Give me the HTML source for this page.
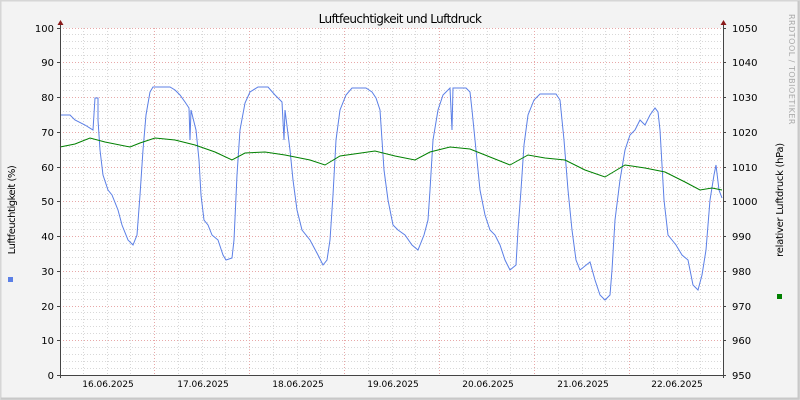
<!DOCTYPE html>
<html><head><meta charset="utf-8"><style>
html,body{margin:0;padding:0;background:#f3f3f3}
svg{display:block}
text{font-family:"DejaVu Sans","Liberation Sans",sans-serif;font-size:10px;fill:#000}
</style></head><body>
<svg width="800" height="400" viewBox="0 0 800 400" xmlns="http://www.w3.org/2000/svg">
<rect x="0" y="0" width="800" height="400" fill="#f3f3f3"/>
<path d="M0.5 0.5H799.5V399.5H0.5Z" fill="none" stroke="#d6d6d6" stroke-width="2"/>
<path d="M1 398.5H799M798.5 1V399" stroke="#c8c8c8" stroke-width="2"/>
<rect x="60" y="28" width="663" height="347" fill="#fff"/>
<g stroke="#d8d8d8" stroke-dasharray="1 2" stroke-width="1">
<path d="M83.5 28V375M107.5 28V375M130.5 28V375M178.5 28V375M202.5 28V375M225.5 28V375M273.5 28V375M297.5 28V375M320.5 28V375M368.5 28V375M392.5 28V375M415.5 28V375M463.5 28V375M487.5 28V375M510.5 28V375M558.5 28V375M582.5 28V375M605.5 28V375M653.5 28V375M677.5 28V375M700.5 28V375"/>
<path d="M60 34.5H723M60 41.5H723M60 48.5H723M60 55.5H723M60 69.5H723M60 76.5H723M60 83.5H723M60 90.5H723M60 104.5H723M60 111.5H723M60 118.5H723M60 125.5H723M60 139.5H723M60 146.5H723M60 153.5H723M60 160.5H723M60 173.5H723M60 180.5H723M60 187.5H723M60 194.5H723M60 208.5H723M60 215.5H723M60 222.5H723M60 229.5H723M60 243.5H723M60 250.5H723M60 257.5H723M60 264.5H723M60 278.5H723M60 285.5H723M60 292.5H723M60 299.5H723M60 312.5H723M60 319.5H723M60 326.5H723M60 333.5H723M60 347.5H723M60 354.5H723M60 361.5H723M60 368.5H723"/>
</g>
<g stroke="#e8a8a8" stroke-dasharray="1 2" stroke-width="1">
<path d="M154.5 28V375M249.5 28V375M344.5 28V375M439.5 28V375M534.5 28V375M629.5 28V375"/>
<path d="M60 28.5H723M60 62.5H723M60 97.5H723M60 132.5H723M60 167.5H723M60 201.5H723M60 236.5H723M60 271.5H723M60 306.5H723M60 340.5H723"/>
</g>
<polyline fill="none" stroke="#5b7fe6" stroke-width="1" points="60,115 70,115 75,120 85,125 93,130 95,98 98,98 98,120 100,150 103,175 108,190 112,195 118,210 122,225 128,240 133,245 137,235 140,195 143,150 146,115 150,92 153,87 170,87 175,90 180,95 185,102 189,108 190,140 191,110 196,130 199,160 201,195 204,220 208,225 212,235 218,240 223,255 226,260 232,258 234,240 237,175 240,130 245,103 250,92 258,87 268,87 275,95 282,102 284,140 285,110 290,150 293,180 297,210 302,230 310,240 318,255 323,265 327,260 330,240 333,195 336,140 340,110 346,95 352,88 366,88 372,92 376,98 380,110 384,170 388,200 393,225 398,230 405,235 412,245 418,250 424,235 428,220 430,190 433,140 438,110 443,95 450,88 452,130 453,88 466,88 470,92 472,110 476,150 480,190 485,215 490,230 495,235 500,245 505,260 510,270 516,265 518,230 521,190 524,145 528,115 534,100 540,94 556,94 560,100 564,140 568,190 572,230 576,260 580,270 590,262 595,280 600,295 605,300 610,295 612,270 615,220 620,180 625,150 630,135 635,130 640,120 645,125 650,115 655,108 658,112 660,130 664,200 668,235 672,240 676,245 682,255 688,260 693,285 698,290 702,275 706,250 710,200 714,175 716,165 719,190 722,198"/>
<polyline fill="none" stroke="#008000" stroke-width="1" points="60,147 75,144 90,138 105,142 130,147 140,143 155,138 175,140 195,145 215,152 232,160 245,153 265,152 285,155 310,160 325,165 340,156 375,151 395,156 415,160 430,152 450,147 470,149 490,157 510,165 528,155 545,158 565,160 585,170 605,177 625,165 645,168 665,172 685,182 700,190 712,188 722,190"/>
<g stroke="#444" stroke-width="1">
<path d="M60.5 24V378M723.5 24V378M57 375.5H726"/>
<path d="M57 28.5H60M57 62.5H60M57 97.5H60M57 132.5H60M57 167.5H60M57 201.5H60M57 236.5H60M57 271.5H60M57 306.5H60M57 340.5H60M723 28.5H726M723 62.5H726M723 97.5H726M723 132.5H726M723 167.5H726M723 201.5H726M723 236.5H726M723 271.5H726M723 306.5H726M723 340.5H726"/>
</g>
<path d="M57.5 25L60.5 20L63.5 25Z M720.5 25L723.5 20L726.5 25Z" fill="#8b1a1a"/>
<g text-anchor="end">
<text x="54" y="32">100</text><text x="54" y="66">90</text><text x="54" y="101">80</text><text x="54" y="136">70</text><text x="54" y="171">60</text><text x="54" y="205">50</text><text x="54" y="240">40</text><text x="54" y="275">30</text><text x="54" y="310">20</text><text x="54" y="344">10</text><text x="54" y="379">0</text>
</g>
<g>
<text x="732" y="32">1050</text><text x="732" y="66">1040</text><text x="732" y="101">1030</text><text x="732" y="136">1020</text><text x="732" y="171">1010</text><text x="732" y="205">1000</text><text x="732" y="240">990</text><text x="732" y="275">980</text><text x="732" y="310">970</text><text x="732" y="344">960</text><text x="732" y="379">950</text>
</g>
<g text-anchor="middle" font-size="9">
<text x="108" y="387" style="font-size:9px">16.06.2025</text><text x="203" y="387" style="font-size:9px">17.06.2025</text><text x="298" y="387" style="font-size:9px">18.06.2025</text><text x="393" y="387" style="font-size:9px">19.06.2025</text><text x="488" y="387" style="font-size:9px">20.06.2025</text><text x="583" y="387" style="font-size:9px">21.06.2025</text><text x="677" y="387" style="font-size:9px">22.06.2025</text>
</g>
<text x="400" y="23" text-anchor="middle" style="font-size:12px;letter-spacing:-0.6px">Luftfeuchtigkeit und Luftdruck</text>
<text transform="translate(15,210) rotate(-90)" text-anchor="middle" style="font-size:10px;letter-spacing:-0.5px">Luftfeuchtigkeit (%)</text>
<text transform="translate(783,200) rotate(-90)" text-anchor="middle" style="font-size:10px;letter-spacing:-0.3px">relativer Luftdruck (hPa)</text>
<text transform="translate(789,14) rotate(90)" style="font-size:8px;fill:#aaa;letter-spacing:0.5px">RRDTOOL / TOBIOETIKER</text>
<rect x="8" y="277" width="5" height="5" fill="#5b7fe6"/>
<rect x="777" y="294" width="5" height="5" fill="#008000"/>
</svg>
</body></html>
